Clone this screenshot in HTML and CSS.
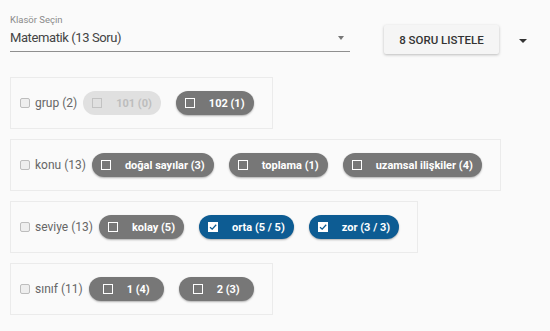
FILE: index.html
```html
<!DOCTYPE html>
<html lang="tr">

<head>
    <meta charset="UTF-8">
    <meta name="viewport" content="width=device-width, initial-scale=1.0">
    <title>Klasör Seçin</title>
    <link rel="stylesheet" href="styles.css">
</head>

<body>

    <div class="toolbar">
        <div class="select-field">
            <label class="select-label">Klasör Seçin</label>
            <div class="select-value">
                <span>Matematik (13 Soru)</span>
                <span class="select-arrow"></span>
            </div>
        </div>
        <button type="button" class="list-button">8 SORU LISTELE</button>
        <span class="menu-arrow"></span>
    </div>

    <div class="filters">
        <div class="filter-box">
            <span class="box-check"></span>
            <span class="filter-name">grup (2)</span>
            <span class="chip chip-disabled"><span class="chip-check"></span>101 (0)</span>
            <span class="chip"><span class="chip-check"></span>102 (1)</span>
        </div>

        <div class="filter-box">
            <span class="box-check"></span>
            <span class="filter-name">konu (13)</span>
            <span class="chip"><span class="chip-check"></span>doğal sayılar (3)</span>
            <span class="chip"><span class="chip-check"></span>toplama (1)</span>
            <span class="chip"><span class="chip-check"></span>uzamsal ilişkiler (4)</span>
        </div>

        <div class="filter-box">
            <span class="box-check"></span>
            <span class="filter-name">seviye (13)</span>
            <span class="chip"><span class="chip-check"></span>kolay (5)</span>
            <span class="chip chip-active"><span class="chip-check checked">
                <svg viewBox="0 0 10 10" width="10" height="10"><path d="M2 5.2 L4.2 7.2 L8.2 2.8" fill="none" stroke="#0d5c93" stroke-width="1.3"/></svg>
            </span>orta (5 / 5)</span>
            <span class="chip chip-active"><span class="chip-check checked">
                <svg viewBox="0 0 10 10" width="10" height="10"><path d="M2 5.2 L4.2 7.2 L8.2 2.8" fill="none" stroke="#0d5c93" stroke-width="1.3"/></svg>
            </span>zor (3 / 3)</span>
        </div>

        <div class="filter-box">
            <span class="box-check"></span>
            <span class="filter-name">sınıf (11)</span>
            <span class="chip"><span class="chip-check"></span>1 (4)</span>
            <span class="chip"><span class="chip-check"></span>2 (3)</span>
        </div>
    </div>

</body>

</html>
```

FILE: styles.css
```css
body {
    font-family: Roboto, 'Liberation Sans', sans-serif;
    background-color: #fafafa;
    margin: 0;
    padding: 0 10px;
    color: #333;
}

/* --- top bar --- */
.toolbar {
    display: flex;
    align-items: flex-start;
    height: 54px;
}

.select-field {
    width: 340px;
    padding-top: 14px;
}

.select-label {
    display: block;
    font-size: 9.5px;
    line-height: 12px;
    color: #8a8a8a;
}

.select-value {
    display: flex;
    align-items: center;
    justify-content: space-between;
    margin-top: 3px;
    padding-bottom: 4px;
    font-size: 13px;
    line-height: 18px;
    letter-spacing: -0.4px;
    color: #444;
    border-bottom: 1px solid #8f8f8f;
}

.select-arrow {
    width: 0;
    height: 0;
    margin-right: 6px;
    border-left: 3.5px solid transparent;
    border-right: 3.5px solid transparent;
    border-top: 4px solid #777;
}

.list-button {
    margin: 25px 0 0 34px;
    height: 29px;
    width: 115px;
    padding: 0;
    border: none;
    border-radius: 2px;
    background-color: #f5f5f5;
    box-shadow: 0 1px 3px rgba(0, 0, 0, 0.25);
    font-family: Roboto, 'Liberation Sans', sans-serif;
    font-size: 11.5px;
    font-weight: 500;
    color: #333;
    cursor: pointer;
}

.menu-arrow {
    margin: 39px 0 0 20px;
    width: 0;
    height: 0;
    border-left: 4px solid transparent;
    border-right: 4px solid transparent;
    border-top: 4px solid #333;
}

/* --- filter groups --- */
.filters {
    margin-top: 23px;
    display: flex;
    flex-direction: column;
    align-items: flex-start;
    gap: 10px;
}

.filter-box {
    display: flex;
    align-items: center;
    padding: 13px 9px;
    border: 1px solid #ebebeb;
}

.box-check {
    width: 8px;
    height: 8px;
    border: 1px solid #bdbdbd;
    border-radius: 2px;
    background-color: #eeeeee;
    margin-right: 5px;
}

.filter-name {
    font-size: 12px;
    color: #666;
}

.chip {
    display: inline-flex;
    align-items: center;
    justify-content: center;
    min-width: 75px;
    box-sizing: border-box;
    height: 24px;
    margin: 0 9px 0 6px;
    padding: 0 9px 0 9px;
    border-radius: 12px;
    background-color: #777;
    box-shadow: 0 1px 2px rgba(0, 0, 0, 0.3);
    color: #fff;
    font-size: 11px;
    font-weight: 700;
}

.chip-check {
    display: inline-flex;
    box-sizing: border-box;
    width: 10px;
    height: 10px;
    margin-right: 14px;
    border: 1.5px solid #fff;
}

.chip-check.checked {
    border: none;
    background-color: #fff;
}

.chip-active {
    background-color: #0d5c93;
}

.chip-disabled {
    background-color: #e0e0e0;
    box-shadow: none;
    color: #bdbdbd;
}

.chip-disabled .chip-check {
    border-color: #c2c2c2;
}
```
